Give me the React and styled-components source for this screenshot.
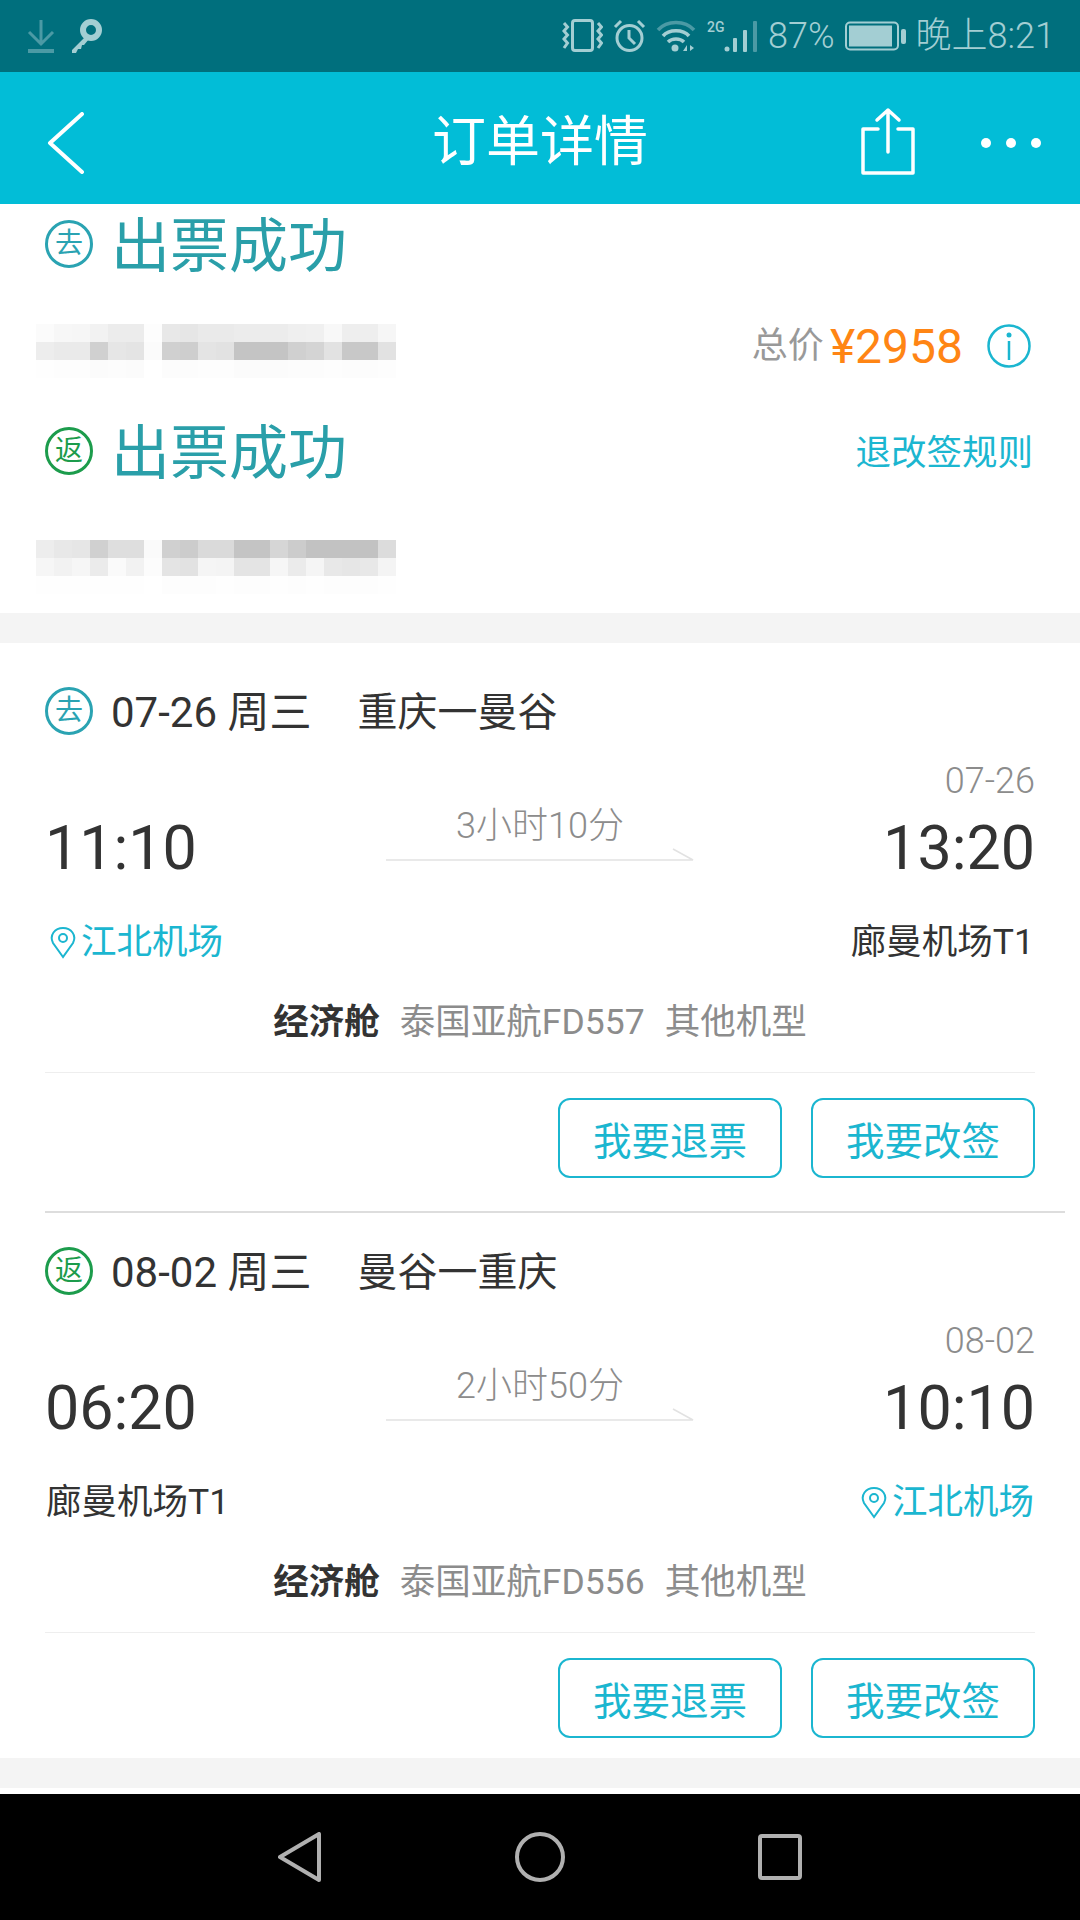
import React from 'react';
import styled, {createGlobalStyle} from 'styled-components';

const teal = '#1bb6d0';
const titleTeal = '#2a9fa9';
const green = '#1c9c4c';
const dark = '#333333';
const grey = '#8c8c8c';
const statusInk = '#a3ced3';
const statusDim = '#4b9aa5';

const GlobalStyle = createGlobalStyle`
html, body {
    margin: 0;
    padding: 0;
    background: #ffffff;
}
* {
    box-sizing: border-box;
}
body {
    font-family: Roboto, "Noto Sans CJK SC", sans-serif;
}
`;

const Page = styled.div`
width: 1080px;
height: 1920px;
display: flex;
flex-direction: column;
overflow: hidden;
background: #ffffff;
`;

const StatusBar = styled.div`
height: 72px;
flex: none;
display: flex;
align-items: center;
justify-content: space-between;
padding: 0 25px 0 27px;
background: #006f7d;
color: ${statusInk};
`;

const StatusGroup = styled.div`
display: flex;
align-items: center;
gap: ${p => p.$gap}px;
`;

const StatusText = styled.span`
font-size: 36px;
line-height: 40px;
font-weight: 300;
white-space: nowrap;
`;

const Header = styled.div`
height: 132px;
flex: none;
display: grid;
grid-template-columns: 1fr auto 1fr;
align-items: center;
padding: 10px 39px 0;
background: #02bdd7;
`;

const HeaderBack = styled.div`
display: flex;
padding-left: 8px;
`;

const HeaderTitle = styled.div`
font-size: 54px;
line-height: 60px;
color: #ffffff;
`;

const HeaderActions = styled.div`
display: flex;
align-items: center;
justify-content: flex-end;
gap: 66px;
`;

const ShareSlot = styled.span`
display: flex;
margin-bottom: 4px;
`;

const Summary = styled.div`
height: 409px;
flex: none;
padding: 12px 49px 0 36px;
`;

const TitleRow = styled.div`
height: 56px;
display: flex;
align-items: center;
justify-content: space-between;
padding-left: 9px;
margin-top: ${p => p.$top || 0}px;
`;

const TitleMain = styled.div`
display: flex;
align-items: center;
gap: 18px;
`;

const Badge = styled.span`
width: 48px;
height: 48px;
flex: none;
display: flex;
align-items: center;
justify-content: center;
border: 3px solid ${p => p.$color};
border-radius: 50%;
color: ${p => p.$color};
font-size: 28px;
line-height: 1;
`;

const TicketState = styled.div`
font-size: 59px;
line-height: 56px;
padding-top: 6px;
color: ${titleTeal};
`;

const RefundRule = styled.div`
font-size: 35.5px;
line-height: 40px;
padding-top: 4px;
margin-right: -2px;
color: ${teal};
`;

const PriceRow = styled.div`
display: flex;
align-items: flex-start;
justify-content: space-between;
margin-top: 52px;
`;

const Mosaic = styled.div`
display: grid;
grid-template-columns: repeat(20, 18px);
grid-auto-rows: 18px;
margin-top: ${p => p.$top || 0}px;
`;

const MosaicCell = styled.span`
background: ${p => p.$shade};
`;

const Price = styled.div`
height: 44px;
display: flex;
align-items: center;
`;

const PriceLabel = styled.span`
font-size: 36px;
line-height: 44px;
color: #999999;
margin-right: 6px;
`;

const PriceValue = styled.span`
font-size: 48px;
line-height: 44px;
padding-top: 1px;
color: #ff8514;
margin-right: 24px;
`;

const Band = styled.div`
height: 30px;
flex: none;
background: #f4f4f4;
`;

const Flights = styled.div`
flex: none;
padding: 0 45px 20px;
`;

const RouteRow = styled.div`
height: 48px;
display: flex;
align-items: center;
margin-top: ${p => p.$top}px;
line-height: 48px;
color: ${dark};
`;

const RouteDate = styled.span`
margin: 3px 0 0 18px;
font-size: 42px;
`;

const RouteCities = styled.span`
margin: 3px 0 0 46px;
font-size: 40px;
`;

const ArrivalDate = styled.div`
height: 36px;
margin-top: 28px;
text-align: right;
font-size: 36px;
line-height: 36px;
font-weight: 300;
color: ${grey};
`;

const TimeRow = styled.div`
height: 75px;
margin-top: 6px;
display: grid;
grid-template-columns: 1fr 308px 1fr;
align-items: end;
`;

const Clock = styled.div`
height: 75px;
padding-top: 8px;
font-size: 61px;
line-height: 70px;
color: ${dark};
text-align: ${p => p.$align};
`;

const Duration = styled.div`
display: flex;
flex-direction: column;
align-items: center;
padding-bottom: 19px;
`;

const DurationText = styled.div`
font-size: 36px;
line-height: 40px;
font-weight: 300;
color: ${grey};
margin-bottom: 2px;
`;

const AirportRow = styled.div`
height: 40px;
margin-top: 42px;
display: flex;
align-items: center;
justify-content: space-between;
padding: 0 1px;
`;

const Airport = styled.div`
display: flex;
align-items: center;
gap: 5px;
font-size: 35.5px;
line-height: 40px;
color: ${p => (p.$accent ? teal : dark)};
`;

const PinSlot = styled.span`
display: flex;
margin-left: 4px;
`;

const CabinRow = styled.div`
height: 40px;
margin-top: 40px;
display: flex;
align-items: center;
justify-content: center;
gap: 20px;
font-size: 35.5px;
line-height: 40px;
color: ${grey};
`;

const CabinName = styled.span`
font-weight: 700;
color: ${dark};
`;

const Divider = styled.div`
height: 1px;
margin-top: 30px;
background: #eeeeee;
`;

const ButtonRow = styled.div`
display: flex;
justify-content: flex-end;
gap: 29px;
margin-top: 25px;
`;

const ActionButton = styled.button`
width: 224px;
height: 80px;
padding: 0;
background: #ffffff;
border: 2px solid ${teal};
border-radius: 12px;
font-family: inherit;
font-size: 38.5px;
color: ${teal};
`;

const FlightRule = styled.div`
height: 2px;
margin: 33px -30px 0 0;
background: #dddddd;
`;

const BottomGap = styled.div`
height: 6px;
flex: none;
background: #ffffff;
`;

const NavBar = styled.div`
flex: 1;
display: flex;
align-items: center;
justify-content: center;
gap: 193px;
background: #000000;
`;

const mosaicA = [
    ['#fbfbfb', '#f7f7f7', '#f6f6f6', '#f2f2f2', '#ececec', '#ececec', '#fdfdfd', '#e8e8e8', '#e6e6e6', '#eaeaea', '#eaeaea', '#ececec', '#ececec', '#ececec', '#efefef', '#f0f0f0', '#f8f8f8', '#eeeeee', '#eeeeee', '#f6f6f6'],
    ['#ededed', '#eaeaea', '#eaeaea', '#d0d0d0', '#e6e6e6', '#e4e4e4', '#fbfbfb', '#d0d0d0', '#cecece', '#e4e4e4', '#e2e2e2', '#c4c4c4', '#c4c4c4', '#c4c4c4', '#d0d0d0', '#d4d4d4', '#e2e2e2', '#c8c8c8', '#c8c8c8', '#e2e2e2'],
    ['#fefefe', '#fdfdfd', '#fdfdfd', '#fbfbfb', '#fcfcfc', '#fbfbfb', '#ffffff', '#fcfcfc', '#fcfcfc', '#fdfdfd', '#fdfdfd', '#fbfbfb', '#fbfbfb', '#fbfbfb', '#fcfcfc', '#fcfcfc', '#fdfdfd', '#fcfcfc', '#fcfcfc', '#fdfdfd'],
];

const mosaicB = [
    ['#ededed', '#e8e8e8', '#e6e6e6', '#d0d0d0', '#dedede', '#dedede', '#fafafa', '#d0d0d0', '#cccccc', '#dadada', '#dadada', '#c4c4c4', '#c4c4c4', '#d6d6d6', '#cccccc', '#c2c2c2', '#c2c2c2', '#c2c2c2', '#c2c2c2', '#dcdcdc'],
    ['#f6f6f6', '#f2f2f2', '#f6f6f6', '#ebebeb', '#fafafa', '#f2f2f2', '#fcfcfc', '#e4e4e4', '#e2e2e2', '#f5f5f5', '#f4f4f4', '#e4e4e4', '#e4e4e4', '#f6f6f6', '#ebebeb', '#f5f5f5', '#e8e8e8', '#e6e6e6', '#e8e8e8', '#f4f4f4'],
    ['#fefefe', '#fefefe', '#fefefe', '#fefefe', '#fefefe', '#fefefe', '#ffffff', '#fdfdfd', '#fdfdfd', '#fdfdfd', '#fefefe', '#fdfdfd', '#fdfdfd', '#fefefe', '#fdfdfd', '#fefefe', '#fdfdfd', '#fdfdfd', '#fdfdfd', '#fefefe'],
];

const flights = [
    {
        kind: '去', color: '#2aa3b2', top: 44, date: '07-26 周三', cities: '重庆一曼谷', arrivalDate: '07-26',
        depart: '11:10', arrive: '13:20', duration: '3小时10分', from: '江北机场', fromAccent: true,
        to: '廊曼机场T1', toAccent: false, number: '泰国亚航FD557',
    },
    {
        kind: '返', color: green, top: 34, date: '08-02 周三', cities: '曼谷一重庆', arrivalDate: '08-02',
        depart: '06:20', arrive: '10:10', duration: '2小时50分', from: '廊曼机场T1', fromAccent: false,
        to: '江北机场', toAccent: true, number: '泰国亚航FD556',
    },
];

function DownloadIcon() {
    return (
        <svg width="28" height="36" viewBox="0 0 28 36" fill="none" stroke={statusDim} strokeWidth="3">
            <path d="M14 2V26M2 14L14 26L26 14" />
            <path d="M1 33H27" strokeWidth="4" />
        </svg>
    );
}

function KeyIcon() {
    return (
        <svg width="34" height="36" viewBox="0 0 34 36" fill="none">
            <circle cx="22" cy="12" r="8" stroke={statusInk} strokeWidth="6" />
            <path d="M16 19L3 32V35H7L9 31H12L13 27H15L20 21Z" fill={statusInk} />
        </svg>
    );
}

function VibrateIcon() {
    return (
        <svg width="41" height="34" viewBox="0 0 41 34" fill="none" stroke={statusInk} strokeWidth="3">
            <rect x="10.5" y="1.5" width="20" height="30" rx="2.5" />
            <path d="M2 4L5.5 8L2 12L5.5 16L2 20L5.5 24L2 29" />
            <path d="M36 4L39.5 8L36 12L39.5 16L36 20L39.5 24L36 29" />
        </svg>
    );
}

function AlarmIcon() {
    return (
        <svg width="33" height="34" viewBox="0 0 33 34" fill="none" stroke={statusInk} strokeWidth="3">
            <circle cx="16.5" cy="19" r="12.5" />
            <path d="M16 11V19L22 25" />
            <path d="M2 8L8 2M31 8L25 2" />
        </svg>
    );
}

function WifiIcon() {
    return (
        <svg width="40" height="34" viewBox="0 0 40 34" fill="none" strokeWidth="3.5">
            <path d="M2 11C11 1 29 1 38 11" stroke={statusDim} />
            <path d="M7 17C13 10 27 10 33 17" stroke={statusInk} />
            <path d="M12 23C16 19 24 19 28 23" stroke={statusInk} />
            <circle cx="19" cy="29" r="3.5" fill={statusInk} />
            <path d="M27 32L31 26V32ZM34 26V32L38 29Z" fill={statusInk} />
        </svg>
    );
}

function SignalIcon() {
    return (
        <svg width="52" height="34" viewBox="0 0 52 34">
            <text x="1" y="13" fontSize="14" fontWeight="500" fontFamily="Roboto, sans-serif" fill={statusInk}>2G</text>
            <circle cx="21" cy="30" r="2.5" fill={statusInk} />
            <rect x="27" y="19" width="4" height="14" rx="1" fill={statusInk} />
            <rect x="37" y="11" width="4" height="22" rx="1" fill={statusInk} />
            <rect x="47" y="2" width="4" height="31" rx="1" fill={statusDim} />
        </svg>
    );
}

function BatteryIcon() {
    return (
        <svg width="61" height="30" viewBox="0 0 61 30" fill="none">
            <rect x="1" y="1.5" width="52" height="27" rx="4" stroke={statusInk} strokeWidth="2" />
            <rect x="4" y="4.5" width="43" height="21" fill={statusInk} />
            <rect x="56" y="8" width="5" height="15" rx="2" fill={statusInk} />
        </svg>
    );
}

function BackIcon() {
    return (
        <svg width="38" height="62" viewBox="0 0 38 62" fill="none" stroke="#ffffff" strokeWidth="4" strokeLinecap="round" strokeLinejoin="round">
            <path d="M35 2L3 31L35 60" />
        </svg>
    );
}

function ShareIcon() {
    return (
        <svg width="54" height="68" viewBox="0 0 54 68" fill="none" stroke="#ffffff" strokeWidth="3.5" strokeLinecap="round" strokeLinejoin="round">
            <path d="M27 3V45M16 13L27 3L38 13" />
            <path d="M17 22H2V66H52V22H37" />
        </svg>
    );
}

function MoreIcon() {
    return (
        <svg width="60" height="12" viewBox="0 0 60 12" fill="#ffffff">
            <circle cx="5" cy="6" r="5" />
            <circle cx="30" cy="6" r="5" />
            <circle cx="55" cy="6" r="5" />
        </svg>
    );
}

function InfoIcon() {
    return (
        <svg width="44" height="44" viewBox="0 0 44 44" fill="none" stroke={teal} strokeWidth="2.5">
            <circle cx="22" cy="22" r="20.5" />
            <circle cx="22" cy="11" r="2.5" fill={teal} stroke="none" />
            <path d="M22 17V36" />
        </svg>
    );
}

function PinIcon() {
    return (
        <svg width="26" height="33" viewBox="0 0 26 33" fill="none" stroke={teal} strokeWidth="2">
            <path d="M13 31L3 17C-1 9 5 2 13 2C21 2 27 9 23 17Z" />
            <circle cx="13" cy="12" r="4" />
        </svg>
    );
}

function ArrowLine() {
    return (
        <svg width="308" height="13" viewBox="0 0 308 13" fill="none" stroke="#e2e2e2" strokeWidth="1.5">
            <path d="M0 12H307L287 1" />
        </svg>
    );
}

function NavBack() {
    return (
        <svg width="44" height="50" viewBox="0 0 44 50" fill="none" stroke="#b0b0b0" strokeWidth="4" strokeLinejoin="round">
            <path d="M41 2V48L2 25Z" />
        </svg>
    );
}

function NavHome() {
    return (
        <svg width="50" height="50" viewBox="0 0 50 50" fill="none" stroke="#b0b0b0" strokeWidth="4">
            <circle cx="25" cy="25" r="23" />
        </svg>
    );
}

function NavRecent() {
    return (
        <svg width="44" height="46" viewBox="0 0 44 46" fill="none" stroke="#b0b0b0" strokeWidth="4" strokeLinejoin="round">
            <rect x="2" y="2" width="40" height="42" rx="2" />
        </svg>
    );
}

function BlurredText({rows, top}) {
    return (
        <Mosaic $top={top}>
            {rows.flat().map((shade, i) => <MosaicCell key={i} $shade={shade} />)}
        </Mosaic>
    );
}

function Flight({flight}) {
    return (
        <>
            <RouteRow $top={flight.top}>
                <Badge $color={flight.color}>{flight.kind}</Badge>
                <RouteDate>{flight.date}</RouteDate>
                <RouteCities>{flight.cities}</RouteCities>
            </RouteRow>
            <ArrivalDate>{flight.arrivalDate}</ArrivalDate>
            <TimeRow>
                <Clock $align="left">{flight.depart}</Clock>
                <Duration>
                    <DurationText>{flight.duration}</DurationText>
                    <ArrowLine />
                </Duration>
                <Clock $align="right">{flight.arrive}</Clock>
            </TimeRow>
            <AirportRow>
                <Airport $accent={flight.fromAccent}>{flight.fromAccent && <PinSlot><PinIcon /></PinSlot>}{flight.from}</Airport>
                <Airport $accent={flight.toAccent}>{flight.toAccent && <PinSlot><PinIcon /></PinSlot>}{flight.to}</Airport>
            </AirportRow>
            <CabinRow>
                <CabinName>经济舱</CabinName>
                <span>{flight.number}</span>
                <span>其他机型</span>
            </CabinRow>
            <Divider />
            <ButtonRow>
                <ActionButton>我要退票</ActionButton>
                <ActionButton>我要改签</ActionButton>
            </ButtonRow>
        </>
    );
}

const App = () => {
    return (
        <Page>
            <GlobalStyle />
            <StatusBar>
                <StatusGroup $gap={14}>
                    <DownloadIcon />
                    <KeyIcon />
                </StatusGroup>
                <StatusGroup $gap={10}>
                    <VibrateIcon />
                    <AlarmIcon />
                    <WifiIcon />
                    <SignalIcon />
                    <StatusText>87%</StatusText>
                    <BatteryIcon />
                    <StatusText>晚上8:21</StatusText>
                </StatusGroup>
            </StatusBar>
            <Header>
                <HeaderBack>
                    <BackIcon />
                </HeaderBack>
                <HeaderTitle>订单详情</HeaderTitle>
                <HeaderActions>
                    <ShareSlot>
                        <ShareIcon />
                    </ShareSlot>
                    <MoreIcon />
                </HeaderActions>
            </Header>
            <Summary>
                <TitleRow>
                    <TitleMain>
                        <Badge $color="#2aa3b2">去</Badge>
                        <TicketState>出票成功</TicketState>
                    </TitleMain>
                </TitleRow>
                <PriceRow>
                    <BlurredText rows={mosaicA} />
                    <Price>
                        <PriceLabel>总价</PriceLabel>
                        <PriceValue>¥2958</PriceValue>
                        <InfoIcon />
                    </Price>
                </PriceRow>
                <TitleRow $top={45}>
                    <TitleMain>
                        <Badge $color={green}>返</Badge>
                        <TicketState>出票成功</TicketState>
                    </TitleMain>
                    <RefundRule>退改签规则</RefundRule>
                </TitleRow>
                <BlurredText rows={mosaicB} top={61} />
            </Summary>
            <Band />
            <Flights>
                <Flight flight={flights[0]} />
                <FlightRule />
                <Flight flight={flights[1]} />
            </Flights>
            <Band />
            <BottomGap />
            <NavBar>
                <NavBack />
                <NavHome />
                <NavRecent />
            </NavBar>
        </Page>
    );
};

export default App;
